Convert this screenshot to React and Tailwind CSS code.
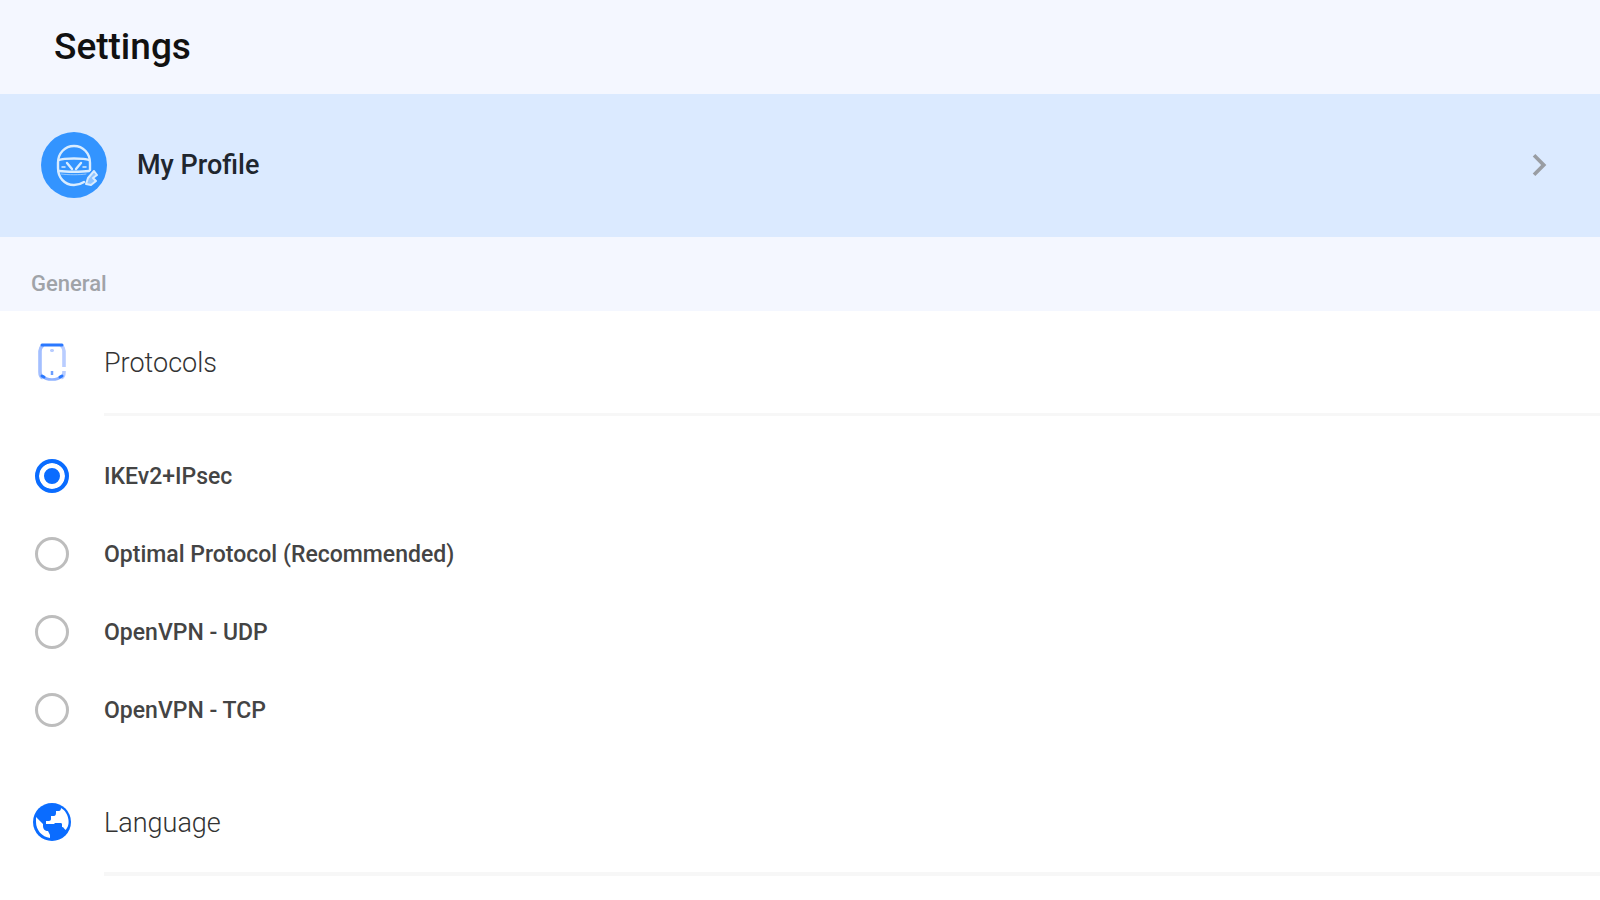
import React, { useState } from "react";
import { MdChevronRight } from "react-icons/md";

const protocols = [
  { id: "ikev2", label: "IKEv2+IPsec" },
  { id: "optimal", label: "Optimal Protocol (Recommended)" },
  { id: "udp", label: "OpenVPN - UDP" },
  { id: "tcp", label: "OpenVPN - TCP" },
];

const AvatarIcon = () => (
  <svg viewBox="0 0 66 66" fill="none" className="size-[66px] shrink-0" aria-hidden="true">
    <circle cx="33" cy="33" r="33" fill="#3394ff" />
    <g stroke="#d9ecff" strokeWidth="2.4" strokeLinecap="round" strokeLinejoin="round">
      <path d="M43 50 C40 52 37 53 33 53 C23 53 17 45 17 36 V31 C17 21 24 14 33 14 C42 14 49 21 49 31 V38" />
      <path d="M18 28 C23 26 43 26 48 28" />
      <path d="M26 31 L31 37 M40 31 L35 37" />
      <path d="M21 35 H24 M42 35 H45" strokeWidth="1.5" />
      <path d="M18 39 C25 40 41 40 48 39" />
      <path d="M20 42 C27 43 39 43 45 42" strokeWidth="1" opacity="0.6" />
    </g>
    <path d="M45 52 L47 46 L53 39 L56 43 L52 46 L55 49 L50 53 Z" fill="#8fc4ff" stroke="#d9ecff" strokeWidth="2" strokeLinejoin="round" />
  </svg>
);

const PhoneIcon = () => (
  <svg viewBox="0 0 28 38" fill="none" className="h-[38px] w-7" aria-hidden="true">
    <path d="M5 2 C3 4 2 5 2 8 V29 C2 32 3 34 5 35" stroke="#a3bfff" strokeWidth="3.6" />
    <path d="M23 2 C25 4 26 5 26 8 V24 M26 28 V29 C26 32 25 34 23 35" stroke="#b9cdff" strokeWidth="3.6" />
    <path d="M4 2 H24" stroke="#2a78ff" strokeWidth="3" strokeLinecap="round" />
    <path d="M4 33 C7 36 9 36.5 14 36.5 S21 36 24 33" stroke="#8fb2ff" strokeWidth="2.5" strokeLinecap="round" />
    <path d="M4 33 L6 34 M24 33 L22 34" stroke="#2a78ff" strokeWidth="3" strokeLinecap="round" />
    <path d="M14 6 V9 M12 7.5 H16" stroke="#b9cdff" strokeWidth="2" />
    <path d="M14 28 V32" stroke="#6b9eff" strokeWidth="2.5" />
  </svg>
);

const GlobeIcon = () => (
  <svg viewBox="0 0 46 46" className="size-[46px]" aria-hidden="true">
    <circle cx="23" cy="23" r="19" fill="#0a6cff" />
    <g fill="#fff">
      <path d="M27 12 H30 C31 12 32 11 32 9 C36 11 39 16 39.5 21 C40 26 38.5 29 36.5 31 C35 30 35 28 33 28 V25 C33 24 32 24 31 24 H26 L25 25 H17 V22 H20 C21 22 22 21 22 20 V17 H25 C26 17 27 16 27 14 Z" />
      <path d="M7 18 L14 25 V27 C14 30 16 32 19 32 L21 36 V39 C13 38 7 31 7 23 Z" />
    </g>
  </svg>
);

const App = () => {
  const [selected, setSelected] = useState("ikev2");

  return (
    <div className="min-h-screen bg-white font-['Roboto',sans-serif]">
      <header className="bg-[#f4f7ff] px-[54px] py-[27px]">
        <h1 className="text-[37px] leading-10 font-medium text-[#111]">Settings</h1>
      </header>

      <a href="#profile" className="flex items-center bg-[#dbeaff] pt-[38px] pr-[39px] pb-[39px] pl-[41px]">
        <AvatarIcon />
        <span className="ml-[30px] grow text-[27px] leading-8 font-medium text-[#20262e]">My Profile</span>
        <MdChevronRight size={44} className="text-[#999da3]" />
      </a>

      <main>
        <h2 className="bg-[#f4f7ff] px-[31px] pt-[35px] pb-[15px] text-[22px] leading-6 font-medium text-[#a0a3a8]">
          General
        </h2>

        <section>
          <div className="flex">
            <div className="flex w-[104px] items-center pb-1 pl-[38px]">
              <PhoneIcon />
            </div>
            <h3 id="protocols" className="grow border-b-3 border-[#f7f7f7] pt-9 pb-[34px] text-[27px] leading-8 font-light text-[#333]">
              Protocols
            </h3>
          </div>

          <div role="radiogroup" aria-labelledby="protocols" className="pt-[21px] pb-[22px]">
            {protocols.map((protocol) => (
              <label key={protocol.id} className="flex items-center py-[22px] pl-[35px]">
                <input
                  type="radio"
                  name="protocol"
                  value={protocol.id}
                  checked={selected === protocol.id}
                  onChange={() => setSelected(protocol.id)}
                  className="size-[34px] appearance-none rounded-full border-3 border-[#bdbdbd] checked:border-4 checked:border-[#0a6cff] checked:bg-[#0a6cff] checked:shadow-[inset_0_0_0_5px_white]"
                />
                <span className="ml-[35px] pt-0.5 text-[23px] leading-8 font-medium text-[#444]">{protocol.label}</span>
              </label>
            ))}
          </div>
        </section>

        <button type="button" className="flex w-full text-left">
          <span className="flex w-[104px] items-center self-stretch pb-1 pl-[29px]">
            <GlobeIcon />
          </span>
          <span className="grow border-b-4 border-[#f7f7f7] pt-9 pb-[33px] text-[27px] leading-8 font-light text-[#333]">
            Language
          </span>
        </button>
      </main>
    </div>
  );
};

export default App;
